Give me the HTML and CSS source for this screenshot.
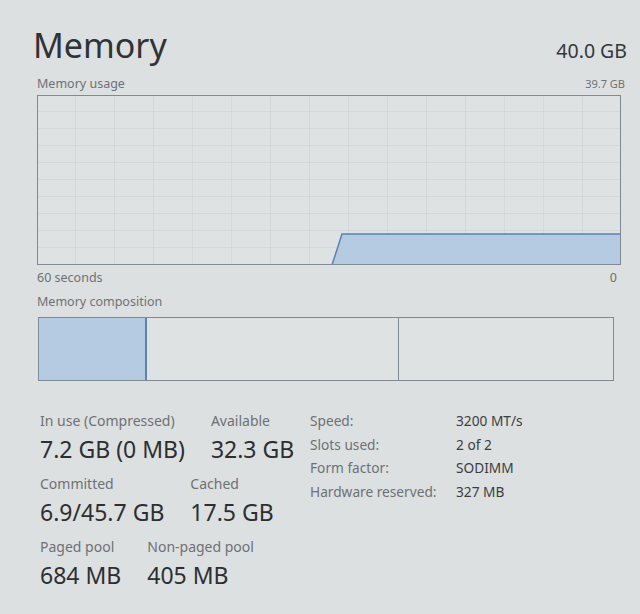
FILE: index.html
```html
<!DOCTYPE html>
<html lang="en">
<head>
  <meta charset="UTF-8">
  <meta name="viewport" content="width=device-width, initial-scale=1.0">
  <title>Memory</title>
  <link rel="stylesheet" href="styles.css">
</head>
<body>
  <div class="panel">
    <header class="head">
      <h1>Memory</h1>
      <span class="total">40.0 GB</span>
    </header>

    <div class="chart-labels usage">
      <span>Memory usage</span>
      <span class="small">39.7 GB</span>
    </div>
    <svg class="chart" width="584" height="170" viewBox="0 0 584 170">
      <defs>
        <pattern id="grid" width="39" height="17" patternUnits="userSpaceOnUse">
          <path d="M39 0V17M0 17H39" fill="none" stroke="#c9ced0" stroke-width="1"/>
        </pattern>
      </defs>
      <rect x="0" y="0" width="584" height="170" fill="#dfe2e3"/>
      <rect x="0" y="0" width="584" height="170" fill="url(#grid)"/>
      <polygon points="295,170 305,139 584,139 584,170" fill="#b4cbe1"/>
      <polyline points="295,170 305,139 584,139" fill="none" stroke="#5783b4" stroke-width="1.5"/>
      <rect x="0.5" y="0.5" width="583" height="169" fill="none" stroke="#7f8a93"/>
    </svg>
    <div class="chart-labels axis">
      <span>60 seconds</span>
      <span>0</span>
    </div>

    <div class="chart-labels comp-label">
      <span>Memory composition</span>
    </div>
    <div class="composition">
      <div class="seg in-use"></div>
      <div class="seg modified"></div>
      <div class="seg free"></div>
    </div>

    <section class="stats">
      <div class="left">
        <div class="row">
          <div class="stat"><span class="label">In use (Compressed)</span><span class="value">7.2 GB (0 MB)</span></div>
          <div class="stat"><span class="label">Available</span><span class="value">32.3 GB</span></div>
        </div>
        <div class="row">
          <div class="stat"><span class="label">Committed</span><span class="value">6.9/45.7 GB</span></div>
          <div class="stat"><span class="label">Cached</span><span class="value">17.5 GB</span></div>
        </div>
        <div class="row">
          <div class="stat"><span class="label">Paged pool</span><span class="value">684 MB</span></div>
          <div class="stat"><span class="label">Non-paged pool</span><span class="value">405 MB</span></div>
        </div>
      </div>
      <dl class="right">
        <dt>Speed:</dt><dd>3200 MT/s</dd>
        <dt>Slots used:</dt><dd>2 of 2</dd>
        <dt>Form factor:</dt><dd>SODIMM</dd>
        <dt>Hardware reserved:</dt><dd>327 MB</dd>
      </dl>
    </section>
  </div>
</body>
</html>
```

FILE: styles.css
```css
body {
  margin: 0;
  background: #dde0e1;
  font-family: "Noto Sans", "Open Sans", sans-serif;
  color: #2b2f31;
}

.panel {
  padding: 22px 13px 0 37px;
}

.head {
  display: flex;
  justify-content: space-between;
  align-items: baseline;
  margin-left: -4px;
}

h1 {
  margin: 0;
  font-weight: 400;
  font-size: 34px;
  line-height: 46px;
  color: #2f3335;
}

.total {
  font-size: 19.5px;
  color: #333739;
}

.chart-labels {
  display: flex;
  justify-content: space-between;
  width: 588px;
  font-size: 12.5px;
  color: #6d7174;
  line-height: 17px;
}

.usage {
  margin-top: 7px;
}

.chart-labels .small {
  font-size: 11px;
  align-self: flex-end;
}

.chart {
  display: block;
  margin-top: 3px;
}

.axis {
  width: 580px;
  margin-top: 4px;
}

.comp-label {
  margin-top: 7px;
}

.composition {
  display: flex;
  width: 574px;
  height: 62px;
  margin-top: 7px;
  margin-left: 1px;
  border: 1px solid #7f8a93;
  background: #dfe2e3;
}

.seg {
  height: 100%;
}

.in-use {
  width: 106px;
  background: #b4cbe1;
  border-right: 2px solid #5a85b3;
}

.modified {
  width: 251px;
  border-right: 1px solid #7f8a93;
}

.free {
  flex: 1;
}

.stats {
  display: flex;
  align-items: flex-start;
  margin-top: 30px;
}

.left {
  display: flex;
  flex-direction: column;
  gap: 10px;
  width: 270px;
  padding-left: 3px;
}

.row {
  display: flex;
  gap: 26px;
}

.stat {
  display: flex;
  flex-direction: column;
}

.label {
  font-size: 14px;
  line-height: 19px;
  color: #6d7174;
}

.value {
  margin-top: 4px;
  font-size: 23px;
  line-height: 30px;
  color: #2b2f31;
}

.right {
  display: grid;
  grid-template-columns: 146px auto;
  row-gap: 4px;
  margin: 0;
  font-size: 13.7px;
  line-height: 19.5px;
}

.right dt {
  color: #6d7174;
}

.right dd {
  margin: 0;
  color: #3a3e40;
}
```
